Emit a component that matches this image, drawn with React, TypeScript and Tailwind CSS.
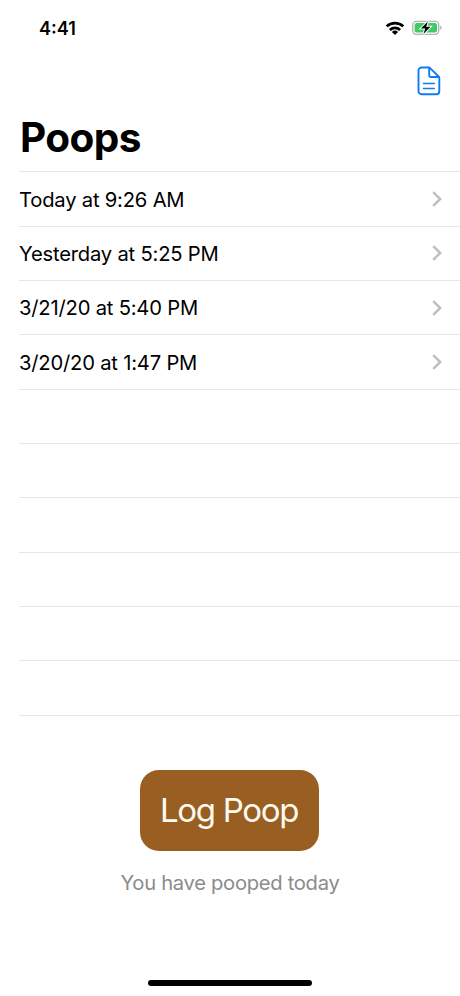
const entries = [
  "Today at 9:26 AM",
  "Yesterday at 5:25 PM",
  "3/21/20 at 5:40 PM",
  "3/20/20 at 1:47 PM",
];

const emptyRows = [0, 1, 2, 3, 4, 5];

function WifiIcon() {
  return (
    <svg width="20" height="15" viewBox="0 0 20 15" fill="none" stroke="#000" strokeWidth="2.7">
      <path d="M1.7 5.4a12 12 0 0 1 16.6 0" />
      <path d="M4.9 8.9a7.4 7.4 0 0 1 10.2 0" />
      <path d="M10 14 6.9 10.9a4.4 4.4 0 0 1 6.2 0Z" fill="#000" stroke="none" />
    </svg>
  );
}

function BatteryIcon() {
  return (
    <svg width="31" height="16" viewBox="0 0 31 16" fill="none">
      <rect x="0.8" y="1.3" width="26" height="13" rx="3.6" stroke="#a3a3a3" strokeWidth="1.1" />
      <rect x="2.6" y="3.1" width="22.4" height="9.4" rx="2" fill="#3fcb63" />
      <path d="M28.3 5.6c1.6.6 1.6 3.8 0 4.4Z" fill="#a3a3a3" />
      <path
        d="M15.8 1.6 8.9 8.6h4.3l-1.7 5.4 7-7.2h-4.3Z"
        fill="#000"
        stroke="#fff"
        strokeWidth="2"
        paintOrder="stroke"
      />
    </svg>
  );
}

function DocumentIcon() {
  return (
    <svg
      width="24"
      height="30"
      viewBox="0 0 24 30"
      fill="none"
      stroke="#0f7df2"
      strokeWidth="1.9"
      strokeLinejoin="round"
      strokeLinecap="round"
    >
      <path d="M4.5 1.5h6.9c.7 0 1.2.2 1.7.7l8.5 8.3c.5.5.7 1 .7 1.7v13.1a3 3 0 0 1-3 3H4.500a3 3 0 0 1-3-3V4.5a3 3 0 0 1 3-3Z" />
      <path d="M12.200 1.8v7.400c0 1.100.7 1.800 1.800 1.800h7.900" />
      <path d="M6.500 17.500h10.800M6.500 22.500h10.800" strokeWidth="1.5" />
    </svg>
  );
}

function Chevron() {
  return (
    <svg className="mb-0.5" width="10" height="16" viewBox="0 0 10 16" fill="none" stroke="#bfbfc2" strokeWidth="2.5">
      <path d="M1.2 1.2 8.2 8l-7 6.8" />
    </svg>
  );
}

export default function App() {
  return (
    <div className="flex h-[996px] w-[460px] flex-col overflow-hidden bg-white font-['Inter',sans-serif] text-black">
      <header className="flex h-[171.4px] shrink-0 flex-col">
        <div className="flex h-[57px] items-center justify-between pl-[39px] pr-[17px]">
          <span className="text-[18px] font-semibold">4:41</span>
          <div className="flex items-center gap-[7px]">
            <WifiIcon />
            <BatteryIcon />
          </div>
        </div>
        <div className="flex h-[48px] items-center justify-end pr-[19px]">
          <button aria-label="Document">
            <DocumentIcon />
          </button>
        </div>
        <h1 className="pl-[20px] text-[40.5px] font-bold leading-[67px] tracking-[-0.6px]">Poops</h1>
      </header>

      <ul className="ml-[19px] flex shrink-0 flex-col border-t border-[#e6e6e7]">
        {entries.map((entry) => (
          <li
            key={entry}
            className="flex h-[54.35px] items-center justify-between border-b border-[#e6e6e7] pr-[18px] pt-[1.6px]"
          >
            <span className="text-[20.2px] tracking-[-0.2px]">{entry}</span>
            <Chevron />
          </li>
        ))}
        {emptyRows.map((row) => (
          <li key={row} className="h-[54.35px] border-b border-[#e6e6e7]" />
        ))}
      </ul>

      <footer className="flex flex-1 flex-col items-center pt-[54px]">
        <button className="mr-px h-[81px] w-[179px] rounded-[19px] bg-[#995e22] pr-px pt-px text-[33px] tracking-[-1.3px] text-[#fffaf0]">
          Log Poop
        </button>
        <p className="mt-[18px] text-[20.2px] leading-[28px] tracking-[-0.3px] text-[#8b8b8d]">
          You have pooped today
        </p>
        <div className="mb-[10px] mt-auto h-[6px] w-[164px] rounded-full bg-black" />
      </footer>
    </div>
  );
}
